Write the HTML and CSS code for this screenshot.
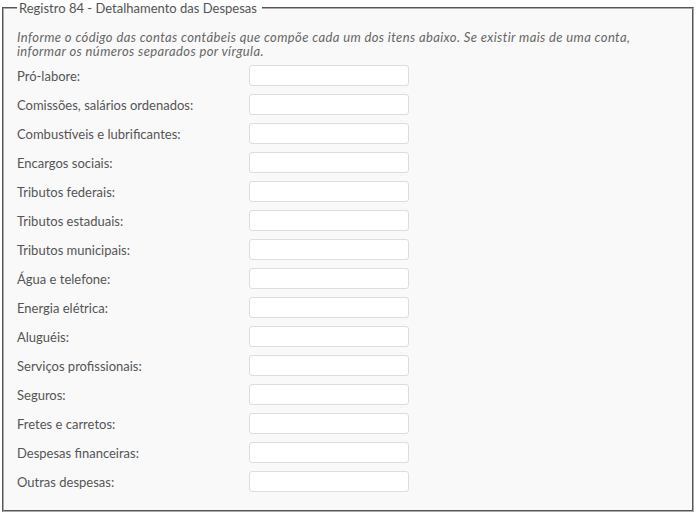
FILE: index.html
```html
<!DOCTYPE html>
<html lang="pt-br">
<head>
  <meta charset="UTF-8" />
  <title>Registro 84 - Detalhamento das Despesas</title>
  <link rel="stylesheet" href="styles.css">
</head>
<body>
  <fieldset class="registro">
    <legend>Registro 84 - Detalhamento das Despesas</legend>
    <p class="hint">Informe o código das contas contábeis que compõe cada um dos itens abaixo. Se existir mais de uma conta, informar os números separados por vírgula.</p>

    <div class="campos">
      <label class="campo"><span>Pró-labore:</span><input type="text" /></label>
      <label class="campo"><span>Comissões, salários ordenados:</span><input type="text" /></label>
      <label class="campo"><span>Combustíveis e lubrificantes:</span><input type="text" /></label>
      <label class="campo"><span>Encargos sociais:</span><input type="text" /></label>
      <label class="campo"><span>Tributos federais:</span><input type="text" /></label>
      <label class="campo"><span>Tributos estaduais:</span><input type="text" /></label>
      <label class="campo"><span>Tributos municipais:</span><input type="text" /></label>
      <label class="campo"><span>Água e telefone:</span><input type="text" /></label>
      <label class="campo"><span>Energia elétrica:</span><input type="text" /></label>
      <label class="campo"><span>Aluguéis:</span><input type="text" /></label>
      <label class="campo"><span>Serviços profissionais:</span><input type="text" /></label>
      <label class="campo"><span>Seguros:</span><input type="text" /></label>
      <label class="campo"><span>Fretes e carretos:</span><input type="text" /></label>
      <label class="campo"><span>Despesas financeiras:</span><input type="text" /></label>
      <label class="campo"><span>Outras despesas:</span><input type="text" /></label>
    </div>
  </fieldset>
</body>
</html>
```

FILE: styles.css
```css
body {
  margin: 0;
  background: #fff;
  font-family: 'Lato', sans-serif;
  font-size: 13px;
  color: #555;
}
.registro {
  margin: 0 3px 3px 2px;
  padding: 0 13px 14px;
  border: 2px groove #aaa;
  background: #f9f9f9;
}
.registro legend {
  padding: 0 5px 0 2px;
  color: #555;
}
.hint {
  margin: 14px 0 3px;
  font-style: italic;
  letter-spacing: 0.38px;
  line-height: 14px;
  color: #666;
}
.campos {
  display: flex;
  flex-direction: column;
}
.campo {
  display: flex;
  align-items: center;
  height: 29px;
}
.campo span {
  width: 232px;
}
.campo input {
  width: 160px;
  height: 21px;
  box-sizing: border-box;
  margin: 0;
  border: 1px solid #ddd;
  border-radius: 3px;
  background: #fff;
}
```
